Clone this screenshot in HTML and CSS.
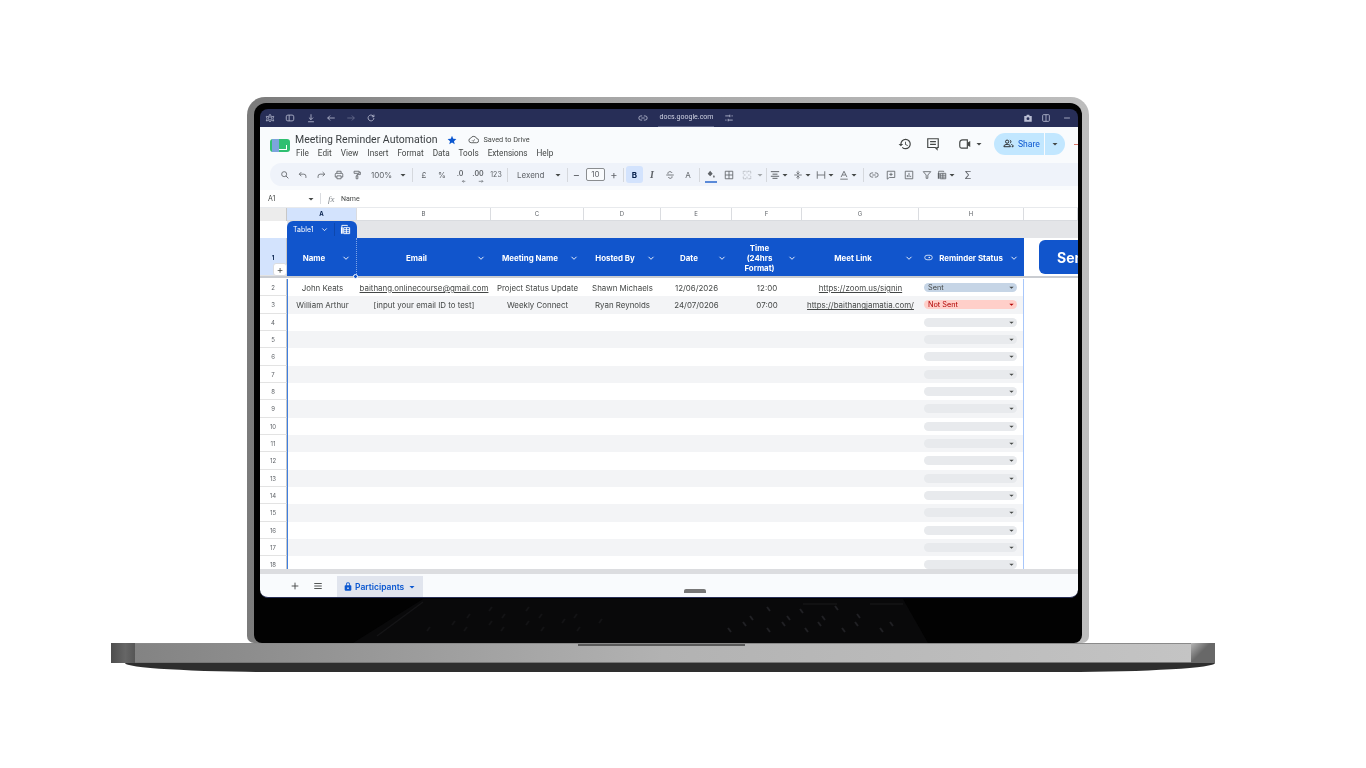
FILE: index.html
```html
<!DOCTYPE html>
<html lang="en">
<head>
    <meta charset="UTF-8">
    <meta name="viewport" content="width=device-width, initial-scale=1.0">
    <title>Meeting Reminder Automation</title>
    <link rel="stylesheet" href="styles.css">
</head>
<body>
    <!-- icon set -->
    <svg class="icon-defs" aria-hidden="true">
        <symbol id="i-search" viewBox="0 0 24 24"><circle cx="10" cy="10" r="6" fill="none" stroke="currentColor" stroke-width="2"/><path d="M14.5 14.5 20 20" stroke="currentColor" stroke-width="2.2"/></symbol>
        <symbol id="i-undo" viewBox="0 0 24 24"><path d="M8 5 3 10l5 5M3 10h11a5 5 0 0 1 5 5v4" fill="none" stroke="currentColor" stroke-width="2"/></symbol>
        <symbol id="i-redo" viewBox="0 0 24 24"><path d="m16 5 5 5-5 5M21 10H10a5 5 0 0 0-5 5v4" fill="none" stroke="currentColor" stroke-width="2"/></symbol>
        <symbol id="i-print" viewBox="0 0 24 24"><path d="M7 8V3h10v5M7 17H3v-7a2 2 0 0 1 2-2h14a2 2 0 0 1 2 2v7h-4M7 14h10v7H7z" fill="none" stroke="currentColor" stroke-width="2"/></symbol>
        <symbol id="i-paint" viewBox="0 0 24 24"><path d="M5 3h12v5H5zM17 5h3v6h-8v3M10 14h4v7h-4z" fill="none" stroke="currentColor" stroke-width="2"/></symbol>
        <symbol id="i-caret" viewBox="0 0 8 8"><path d="M1.5 3h5L4 5.5z" fill="currentColor"/></symbol>
        <symbol id="i-chevron" viewBox="0 0 10 10"><path d="M2.5 3.8 5 6.3 7.500 3.8" fill="none" stroke="currentColor" stroke-width=".9"/></symbol>
        <symbol id="i-dec-less" viewBox="0 0 24 24"><path d="M13 20h7M16 17l-3 3 3 3" fill="none" stroke="currentColor" stroke-width="1.6"/></symbol>
        <symbol id="i-dec-more" viewBox="0 0 24 24"><path d="M9 20h10M16 17l3 3-3 3" fill="none" stroke="currentColor" stroke-width="1.6"/></symbol>
        <symbol id="i-strike" viewBox="0 0 24 24"><path d="M3 12h18M17 7c-1-2-3-3-5-3-3 0-5 1.5-5 4 0 1 .4 1.5 1 2M8 17c1 2 2.5 3 4.5 3 3 0 4.5-1.5 4.5-3.5 0-.5-.1-1-.4-1.5" fill="none" stroke="currentColor" stroke-width="2"/></symbol>
        <symbol id="i-fill" viewBox="0 0 24 24"><path d="M10 2 4 9l6 6 6-6zM19 12c-1.2 2-2 3-2 4a2 2 0 0 0 4 0c0-1-.8-2-2-4z" fill="currentColor"/></symbol>
        <symbol id="i-borders" viewBox="0 0 24 24"><path d="M3 3h18v18H3zM12 3v18M3 12h18" fill="none" stroke="currentColor" stroke-width="2"/></symbol>
        <symbol id="i-merge" viewBox="0 0 24 24"><path d="M3 9V3h7M14 3h7v6M21 15v6h-7M10 21H3v-6M12 3v5M12 16v5M4 12h5M15 12h5" fill="none" stroke="currentColor" stroke-width="2" stroke-dasharray="3 1"/></symbol>
        <symbol id="i-align" viewBox="0 0 24 24"><path d="M2 4h20M6 10h12M2 15h20M6 20h12" fill="none" stroke="currentColor" stroke-width="2.4"/></symbol>
        <symbol id="i-valign" viewBox="0 0 24 24"><path d="M3 12h18M12 2v7M8.5 6 12 9.5 15.5 6M12 22v-7M8.5 18 12 14.5 15.5 18" fill="none" stroke="currentColor" stroke-width="2"/></symbol>
        <symbol id="i-wrap" viewBox="0 0 24 24"><path d="M3 3v18M21 3v18M3 12h18" fill="none" stroke="currentColor" stroke-width="2"/></symbol>
        <symbol id="i-rotate" viewBox="0 0 24 24"><path d="M5 17 12 3l7 14M8 12h8M3 22h18" fill="none" stroke="currentColor" stroke-width="2"/></symbol>
        <symbol id="i-link" viewBox="0 0 24 24"><path d="M10 7H7a5 5 0 0 0 0 10h3M14 7h3a5 5 0 0 1 0 10h-3M8 12h8" fill="none" stroke="currentColor" stroke-width="2"/></symbol>
        <symbol id="i-addnote" viewBox="0 0 24 24"><path d="M3 3h18v15H8l-5 4zM12 6.5v8M8 10.5h8" fill="none" stroke="currentColor" stroke-width="2"/></symbol>
        <symbol id="i-chart" viewBox="0 0 24 24"><path d="M3 3h18v18H3zM8 17v-5M12 17V7M16 17v-3" fill="none" stroke="currentColor" stroke-width="2"/></symbol>
        <symbol id="i-filter" viewBox="0 0 24 24"><path d="M3 4h18l-7 8v8h-4v-8z" fill="none" stroke="currentColor" stroke-width="2"/></symbol>
        <symbol id="i-table" viewBox="0 0 24 24"><path d="M4 8V3h12v2M8 8h13v13H8zM8 12.5h13M8 17h13M14 8v13" fill="none" stroke="currentColor" stroke-width="2"/><path d="M2 7h4v14H2z" fill="currentColor"/></symbol>
        <symbol id="i-history" viewBox="0 0 24 24"><path d="M13 3a9 9 0 0 0-9 9H1l3.89 3.89.07.14L9 12H6c0-3.87 3.13-7 7-7s7 3.13 7 7-3.13 7-7 7c-1.93 0-3.68-.79-4.94-2.06l-1.42 1.42A8.954 8.954 0 0 0 13 21a9 9 0 0 0 0-18zm-1 5v5l4.28 2.54.72-1.21-3.5-2.08V8H12z" fill="currentColor"/></symbol>
        <symbol id="i-comment" viewBox="0 0 24 24"><path d="M3 3h18v15h-2v3l-3-3H3zM7 8h10M7 12.5h10" fill="none" stroke="currentColor" stroke-width="2"/></symbol>
        <symbol id="i-video" viewBox="0 0 24 24"><path d="M8 5h8v14H6a3 3 0 0 1-3-3V10a5 5 0 0 1 5-5z" fill="none" stroke="currentColor" stroke-width="2"/><path d="m16 10 5-3v10l-5-3z" fill="currentColor"/></symbol>
        <symbol id="i-people" viewBox="0 0 24 24"><circle cx="9" cy="8" r="3.5" fill="none" stroke="currentColor" stroke-width="2"/><path d="M2 19v-1.5c0-2 4-3.5 7-3.5s7 1.5 7 3.5V19zM15 4.7a3.5 3.5 0 0 1 0 6.6M18 14c2 .6 4 1.6 4 3.5V19h-3" fill="none" stroke="currentColor" stroke-width="2"/></symbol>
        <symbol id="i-cloud" viewBox="0 0 24 24"><path d="M7 19a5 5 0 0 1-1-9.900A7 7 0 0 1 19 10a4.5 4.5 0 0 1-.5 9zM9 14l2 2 4-4" fill="none" stroke="currentColor" stroke-width="1.8"/></symbol>
        <symbol id="i-star" viewBox="0 0 24 24"><path d="m12 2 3 7 7.500.7-5.700 5 1.700 7.300L12 18.200 5.500 22l1.700-7.300-5.700-5L9 9z" fill="currentColor"/></symbol>
        <symbol id="i-lock" viewBox="0 0 24 24"><path d="M18 9h-1V7a5 5 0 0 0-10 0v2H6a2 2 0 0 0-2 2v9a2 2 0 0 0 2 2h12a2 2 0 0 0 2-2v-9a2 2 0 0 0-2-2zM9 7a3 3 0 0 1 6 0v2H9zm3 11a2 2 0 1 1 0-4 2 2 0 0 1 0 4z" fill="currentColor"/></symbol>
        <symbol id="i-menu" viewBox="0 0 24 24"><path d="M3 6h18M3 12h18M3 18h18" stroke="currentColor" stroke-width="2.2"/></symbol>
        <symbol id="i-plus" viewBox="0 0 24 24"><path d="M12 4v16M4 12h16" stroke="currentColor" stroke-width="2.2"/></symbol>
        <symbol id="i-shell" viewBox="0 0 24 24"><path d="M12 3 8 9 3 8l2 6-2 5 5-1 4 3 4-3 5 1-2-5 2-6-5 1zM12 9a4 4 0 1 0 0 8 4 4 0 0 0 0-8z" fill="none" stroke="currentColor" stroke-width="1.8"/></symbol>
        <symbol id="i-sidebar" viewBox="0 0 24 24"><rect x="3" y="5" width="18" height="14" rx="4" fill="none" stroke="currentColor" stroke-width="2"/><path d="M10 5v14" stroke="currentColor" stroke-width="2"/></symbol>
        <symbol id="i-download" viewBox="0 0 24 24"><path d="M12 3v13M7 11l5 5 5-5M5 21h14" fill="none" stroke="currentColor" stroke-width="2"/></symbol>
        <symbol id="i-back" viewBox="0 0 24 24"><path d="M21 12H4M10 6l-6 6 6 6" fill="none" stroke="currentColor" stroke-width="2"/></symbol>
        <symbol id="i-forward" viewBox="0 0 24 24"><path d="M3 12h17M14 6l6 6-6 6" fill="none" stroke="currentColor" stroke-width="2"/></symbol>
        <symbol id="i-reload" viewBox="0 0 24 24"><path d="M19 12a7 7 0 1 1-2-5l2 2M19 4v5h-5" fill="none" stroke="currentColor" stroke-width="2"/></symbol>
        <symbol id="i-tune" viewBox="0 0 24 24"><path d="M3 7h11M18 7h3M14 4v6M3 17h3M10 17h11M10 14v6" fill="none" stroke="currentColor" stroke-width="2"/></symbol>
        <symbol id="i-camera" viewBox="0 0 24 24"><path d="M3 7h5l1-3h6l1 3h5v14H3zM12 10a3.5 3.5 0 1 0 0 7 3.5 3.5 0 0 0 0-7z" fill="currentColor" fill-rule="evenodd"/></symbol>
        <symbol id="i-panel" viewBox="0 0 24 24"><rect x="4" y="4" width="16" height="16" rx="2" fill="none" stroke="currentColor" stroke-width="2"/><path d="M12 4v16" stroke="currentColor" stroke-width="2"/></symbol>
        <symbol id="i-dash" viewBox="0 0 24 24"><path d="M5 12h14" stroke="currentColor" stroke-width="2"/></symbol>
        <symbol id="i-eye" viewBox="0 0 24 24"><rect x="2" y="6" width="20" height="12" rx="6" fill="none" stroke="currentColor" stroke-width="2"/><circle cx="14" cy="12" r="2" fill="currentColor"/></symbol>
    </svg>

    <div class="laptop">
        <div class="lid">
            <div class="screen">
                <!-- browser strip -->
                <div class="browser-bar">
                    <div class="browser-left">
                        <svg class="bi"><use href="#i-shell"/></svg>
                        <svg class="bi"><use href="#i-sidebar"/></svg>
                        <svg class="bi"><use href="#i-download"/></svg>
                        <svg class="bi"><use href="#i-back"/></svg>
                        <svg class="bi dim"><use href="#i-forward"/></svg>
                        <svg class="bi"><use href="#i-reload"/></svg>
                    </div>
                    <div class="browser-url">
                        <svg class="bi"><use href="#i-link"/></svg>
                        <span class="url-text">docs.google.com</span>
                        <svg class="bi"><use href="#i-tune"/></svg>
                    </div>
                    <div class="browser-right">
                        <svg class="bi"><use href="#i-camera"/></svg>
                        <svg class="bi"><use href="#i-panel"/></svg>
                        <svg class="bi"><use href="#i-dash"/></svg>
                    </div>
                </div>

                <!-- docs header -->
                <div class="app-bar">
                    <div class="app-top">
                        <div class="logo"><span class="logo-side"></span><span class="logo-mark"></span></div>
                        <div class="title-block">
                            <div class="title-row">
                                <span class="doc-title">Meeting Reminder Automation</span>
                                <svg class="star"><use href="#i-star"/></svg>
                                <svg class="cloud"><use href="#i-cloud"/></svg>
                                <span class="saved">Saved to Drive</span>
                            </div>
                            <div class="menu">
                                <span>File</span><span>Edit</span><span>View</span><span>Insert</span><span>Format</span><span>Data</span><span>Tools</span><span>Extensions</span><span>Help</span>
                            </div>
                        </div>
                        <div class="app-actions">
                            <svg class="act-icon"><use href="#i-history"/></svg>
                            <svg class="act-icon"><use href="#i-comment"/></svg>
                            <span class="meet"><svg class="act-icon"><use href="#i-video"/></svg><svg class="caret"><use href="#i-caret"/></svg></span>
                            <div class="share">
                                <span class="share-main"><svg class="people"><use href="#i-people"/></svg>Share</span>
                                <span class="share-drop"><svg class="caret"><use href="#i-caret"/></svg></span>
                            </div>
                            <span class="avatar"></span>
                        </div>
                    </div>

                    <div class="toolbar">
                        <span class="tool"><svg><use href="#i-search"/></svg></span>
                        <span class="tool"><svg><use href="#i-undo"/></svg></span>
                        <span class="tool"><svg><use href="#i-redo"/></svg></span>
                        <span class="tool"><svg><use href="#i-print"/></svg></span>
                        <span class="tool"><svg><use href="#i-paint"/></svg></span>
                        <span class="select select-zoom">100%<svg class="caret"><use href="#i-caret"/></svg></span>
                        <span class="sep"></span>
                        <span class="tool">£</span>
                        <span class="tool">%</span>
                        <span class="tool dec">.0<svg><use href="#i-dec-less"/></svg></span>
                        <span class="tool dec">.00<svg><use href="#i-dec-more"/></svg></span>
                        <span class="tool small">123</span>
                        <span class="sep"></span>
                        <span class="select select-font">Lexend<svg class="caret"><use href="#i-caret"/></svg></span>
                        <span class="sep"></span>
                        <span class="tool tool-minus">&minus;</span>
                        <span class="size-box">10</span>
                        <span class="tool tool-plus">+</span>
                        <span class="sep"></span>
                        <span class="tool tool-bold">B</span>
                        <span class="tool tool-italic">I</span>
                        <span class="tool"><svg><use href="#i-strike"/></svg></span>
                        <span class="tool tool-color">A</span>
                        <span class="sep"></span>
                        <span class="tool tool-fill"><svg><use href="#i-fill"/></svg></span>
                        <span class="tool"><svg><use href="#i-borders"/></svg></span>
                        <span class="tool dim"><svg><use href="#i-merge"/></svg></span>
                        <svg class="caret dim"><use href="#i-caret"/></svg>
                        <span class="sep"></span>
                        <span class="combo"><svg class="combo-icon"><use href="#i-align"/></svg><svg class="caret"><use href="#i-caret"/></svg></span>
                        <span class="combo"><svg class="combo-icon"><use href="#i-valign"/></svg><svg class="caret"><use href="#i-caret"/></svg></span>
                        <span class="combo"><svg class="combo-icon"><use href="#i-wrap"/></svg><svg class="caret"><use href="#i-caret"/></svg></span>
                        <span class="combo"><svg class="combo-icon"><use href="#i-rotate"/></svg><svg class="caret"><use href="#i-caret"/></svg></span>
                        <span class="sep"></span>
                        <span class="tool tool-link"><svg><use href="#i-link"/></svg></span>
                        <span class="tool"><svg><use href="#i-addnote"/></svg></span>
                        <span class="tool"><svg><use href="#i-chart"/></svg></span>
                        <span class="tool"><svg><use href="#i-filter"/></svg></span>
                        <span class="combo"><svg class="combo-icon"><use href="#i-table"/></svg><svg class="caret"><use href="#i-caret"/></svg></span>
                        <span class="tool tool-sigma">&Sigma;</span>
                    </div>
                </div>

                <!-- formula bar -->
                <div class="formula-bar">
                    <span class="cell-ref">A1</span>
                    <svg class="caret"><use href="#i-caret"/></svg>
                    <span class="formula-sep"></span>
                    <span class="fx">fx</span>
                    <span class="formula-text">Name</span>
                </div>

                <!-- sheet -->
                <div class="cols col-head">
                    <div class="corner"></div>
                    <div class="col-label active">A</div>
                    <div class="col-label">B</div>
                    <div class="col-label">C</div>
                    <div class="col-label">D</div>
                    <div class="col-label">E</div>
                    <div class="col-label">F</div>
                    <div class="col-label">G</div>
                    <div class="col-label">H</div>
                    <div class="col-label"></div>
                </div>

                <div class="table-strip">
                    <div class="strip-gutter"></div>
                    <div class="strip-gray">
                        <div class="table-tab">
                            <span>Table1</span>
                            <svg class="tab-chev"><use href="#i-chevron"/></svg>
                            <span class="tab-div"></span>
                            <svg class="tab-table"><use href="#i-table"/></svg>
                        </div>
                    </div>
                </div>

                <div class="cols head-row">
                    <div class="row-num head-num">1<span class="add-box">+</span></div>
                    <div class="th th-first"><span>Name</span><svg><use href="#i-chevron"/></svg><i class="sel-handle"></i></div>
                    <div class="th"><span>Email</span><svg><use href="#i-chevron"/></svg></div>
                    <div class="th"><span>Meeting Name</span><svg><use href="#i-chevron"/></svg></div>
                    <div class="th"><span>Hosted By</span><svg><use href="#i-chevron"/></svg></div>
                    <div class="th"><span>Date</span><svg><use href="#i-chevron"/></svg></div>
                    <div class="th"><span>Time<br>(24hrs<br>Format)</span><svg><use href="#i-chevron"/></svg></div>
                    <div class="th"><span>Meet Link</span><svg><use href="#i-chevron"/></svg></div>
                    <div class="th th-status"><svg class="eye"><use href="#i-eye"/></svg><span>Reminder Status</span><svg><use href="#i-chevron"/></svg></div>
                    <div class="send-cell"><button class="send-btn">Send</button></div>
                </div>

                <div class="rows">
                    <div class="cols row">
                        <div class="row-num">2</div>
                        <div class="td">John Keats</div>
                        <div class="td link">baithang.onlinecourse@gmail.com</div>
                        <div class="td">Project Status Update</div>
                        <div class="td">Shawn Michaels</div>
                        <div class="td">12/06/2026</div>
                        <div class="td">12:00</div>
                        <div class="td link">https://zoom.us/signin</div>
                        <div class="td-status"><span class="pill pill-sent">Sent<svg class="caret"><use href="#i-caret"/></svg></span></div>
                    </div>
                    <div class="cols row alt">
                        <div class="row-num">3</div>
                        <div class="td">William Arthur</div>
                        <div class="td">[input your email ID to test]</div>
                        <div class="td">Weekly Connect</div>
                        <div class="td">Ryan Reynolds</div>
                        <div class="td">24/07/0206</div>
                        <div class="td">07:00</div>
                        <div class="td link">https://baithangjamatia.com/</div>
                        <div class="td-status"><span class="pill pill-not">Not Sent<svg class="caret"><use href="#i-caret"/></svg></span></div>
                    </div>
                    <div class="cols row"><div class="row-num">4</div><div class="blank"></div><div class="td-status"><span class="pill"><svg class="caret"><use href="#i-caret"/></svg></span></div></div>
                    <div class="cols row alt"><div class="row-num">5</div><div class="blank"></div><div class="td-status"><span class="pill"><svg class="caret"><use href="#i-caret"/></svg></span></div></div>
                    <div class="cols row"><div class="row-num">6</div><div class="blank"></div><div class="td-status"><span class="pill"><svg class="caret"><use href="#i-caret"/></svg></span></div></div>
                    <div class="cols row alt"><div class="row-num">7</div><div class="blank"></div><div class="td-status"><span class="pill"><svg class="caret"><use href="#i-caret"/></svg></span></div></div>
                    <div class="cols row"><div class="row-num">8</div><div class="blank"></div><div class="td-status"><span class="pill"><svg class="caret"><use href="#i-caret"/></svg></span></div></div>
                    <div class="cols row alt"><div class="row-num">9</div><div class="blank"></div><div class="td-status"><span class="pill"><svg class="caret"><use href="#i-caret"/></svg></span></div></div>
                    <div class="cols row"><div class="row-num">10</div><div class="blank"></div><div class="td-status"><span class="pill"><svg class="caret"><use href="#i-caret"/></svg></span></div></div>
                    <div class="cols row alt"><div class="row-num">11</div><div class="blank"></div><div class="td-status"><span class="pill"><svg class="caret"><use href="#i-caret"/></svg></span></div></div>
                    <div class="cols row"><div class="row-num">12</div><div class="blank"></div><div class="td-status"><span class="pill"><svg class="caret"><use href="#i-caret"/></svg></span></div></div>
                    <div class="cols row alt"><div class="row-num">13</div><div class="blank"></div><div class="td-status"><span class="pill"><svg class="caret"><use href="#i-caret"/></svg></span></div></div>
                    <div class="cols row"><div class="row-num">14</div><div class="blank"></div><div class="td-status"><span class="pill"><svg class="caret"><use href="#i-caret"/></svg></span></div></div>
                    <div class="cols row alt"><div class="row-num">15</div><div class="blank"></div><div class="td-status"><span class="pill"><svg class="caret"><use href="#i-caret"/></svg></span></div></div>
                    <div class="cols row"><div class="row-num">16</div><div class="blank"></div><div class="td-status"><span class="pill"><svg class="caret"><use href="#i-caret"/></svg></span></div></div>
                    <div class="cols row alt"><div class="row-num">17</div><div class="blank"></div><div class="td-status"><span class="pill"><svg class="caret"><use href="#i-caret"/></svg></span></div></div>
                    <div class="cols row"><div class="row-num">18</div><div class="blank"></div><div class="td-status"><span class="pill"><svg class="caret"><use href="#i-caret"/></svg></span></div></div>
                </div>

                <div class="scrollbar"></div>

                <div class="sheet-tabs">
                    <svg class="tabs-icon tabs-plus"><use href="#i-plus"/></svg>
                    <svg class="tabs-icon tabs-menu"><use href="#i-menu"/></svg>
                    <div class="sheet-tab">
                        <svg class="lock"><use href="#i-lock"/></svg>
                        <span>Participants</span>
                        <svg class="caret"><use href="#i-caret"/></svg>
                    </div>
                    <span class="home-handle"></span>
                </div>

                <!-- keyboard reflected in the bezel -->
                <svg class="reflection" viewBox="0 0 818 45">
                    <polygon points="163,1 643,1 668,45 93,45" fill="#09090a"/>
                    <path d="M163 4 117 38M543 6h34M610 6h33" stroke="#141416" stroke-width="1.5" fill="none"/>
                    <path d="M507 9l3 4M540 11l3 4M575 8l3 4M490 18l3 4M527 18l3 4M562 18l3 4M597 16l3 4M483 24l3 4M522 24l3 4M558 24l3 4M595 24l3 4M630 24l3 4M468 30l3 4M507 30l3 4M545 30l3 4M582 30l3 4M620 30l3 4" stroke="#202024" stroke-width="2" fill="none"/>
                    <path d="M232 9l-3 4M269 9l-3 4M210 16l-3 4M245 16l-3 4M282 16l-3 4M317 16l-3 4M195 23l-3 4M232 23l-3 4M269 23l-3 4M305 21l-3 4M342 21l-3 4M170 29l-3 4M207 29l-3 4M244 29l-3 4M284 29l-3 4M320 29l-3 4" stroke="#131315" stroke-width="2" fill="none"/>
                </svg>
            </div>
        </div>
        <div class="base">
            <div class="base-cap cap-left"></div>
            <div class="base-mid"><span class="base-notch"></span></div>
            <div class="base-cap cap-right"></div>
        </div>
        <div class="base-shadow"></div>
    </div>
</body>
</html>
```

FILE: styles.css
```css
* {
    box-sizing: border-box;
}
html, body {
    margin: 0;
    height: 100%;
    background-color: #fff;
    overflow: hidden;
}
body {
    font-family: "Inter", "Liberation Sans", sans-serif;
    color: #444746;
}
svg {
    display: block;
}
.icon-defs {
    width: 0;
    height: 0;
    overflow: hidden;
}
.caret {
    width: 8px;
    height: 8px;
    flex: none;
    color: #444746;
}
.dim {
    opacity: .45;
}

/* laptop body */
.laptop {
    padding: 97px 0 0 111px;
}
.lid {
    margin-left: 136px;
    width: 842px;
    height: 546px;
    padding: 6px 7px 0;
    border-radius: 18px 18px 7px 7px;
    background: linear-gradient(90deg, #7b7b7b, #a5a5a5 40%, #bdbdbd);
}
.screen {
    width: 828px;
    height: 540px;
    padding: 6px 6px 0;
    background-color: #020202;
    border-radius: 12px 12px 8px 8px;
    display: flex;
    flex-direction: column;
    overflow: hidden;
    filter: blur(.3px);
}
.screen > * {
    flex: none;
    width: 818px;
    overflow: hidden;
}
.reflection {
    height: 45px;
}
.base {
    display: flex;
    width: 1104px;
    height: 20px;
}
.base-cap {
    width: 24px;
    background: linear-gradient(90deg, #4d4d4d, #666 60%, #565656);
}
.cap-right {
    background: linear-gradient(135deg, #b5b5b5, #686868 45%);
}
.base-mid {
    flex: 1;
    background: linear-gradient(90deg, #838383, #b2b2b2 50%, #c4c4c4);
    border-top: 1px solid #8a8a8a;
    border-bottom: 1px solid #777;
}
.base-notch {
    display: block;
    width: 167px;
    height: 2px;
    margin-left: 443px;
    background-color: #5a5a5a;
}
.base-shadow {
    width: 1090px;
    height: 9px;
    margin-left: 14px;
    background-color: #2e2e2e;
    border-radius: 0 0 150px 150px / 0 0 9px 9px;
}

/* browser strip */
.browser-bar {
    height: 18px;
    background-color: #272e57;
    color: #b9bdd2;
    display: flex;
    align-items: center;
    border-radius: 8px 8px 0 0;
}
.bi {
    width: 10px;
    height: 10px;
    flex: none;
}
.browser-left {
    display: flex;
    gap: 10.3px;
    padding-left: 5px;
}
.browser-url {
    display: flex;
    align-items: center;
    margin-left: 262px;
    gap: 10px;
}
.url-text {
    font-family: "Roboto", sans-serif;
    font-size: 7px;
    line-height: 17px;
    color: #cfd2e2;
    border-bottom: 1px solid #5c6285;
    padding: 0 1px;
}
.browser-right {
    display: flex;
    gap: 8px;
    margin-left: 289px;
}
.browser-right .bi:last-child {
    margin-left: 3px;
}

/* docs header */
.app-bar {
    height: 63px;
    background-color: #f9fbfd;
}
.app-top {
    height: 36px;
    display: flex;
    align-items: flex-start;
    padding-left: 10px;
}
.logo {
    width: 20px;
    height: 13px;
    margin-top: 12px;
    border-radius: 3px;
    background-color: #2fbf71;
    display: flex;
    overflow: hidden;
}
.logo-side {
    width: 7px;
    margin-left: 2px;
    background-color: #7ca4dd;
}
.logo-mark {
    width: 8px;
    height: 5px;
    border-bottom: 1px solid #fff;
    border-right: 1px solid #fff;
    margin-top: 6px;
}
.title-block {
    margin-left: 5px;
    padding-top: 5px;
}
.title-row {
    display: flex;
    align-items: center;
    height: 15px;
}
.doc-title {
    font-family: "Roboto", sans-serif;
    font-size: 10.5px;
    color: #3c4043;
    white-space: nowrap;
}
.star {
    width: 10px;
    height: 10px;
    margin-left: 10px;
    color: #0b57d0;
}
.cloud {
    width: 11px;
    height: 11px;
    margin-left: 11px;
    color: #444746;
}
.saved {
    margin-left: 4px;
    font-family: "Roboto", sans-serif;
    font-size: 7.3px;
    color: #444746;
    white-space: nowrap;
}
.menu {
    display: flex;
    gap: 9px;
    padding-left: 1px;
    margin-top: 1px;
    font-family: "Roboto", sans-serif;
    font-size: 8.2px;
    line-height: 11px;
    color: #444746;
}
.app-actions {
    display: flex;
    align-items: center;
    margin-left: auto;
    height: 34px;
}
.act-icon {
    width: 14px;
    height: 14px;
    margin-right: 14px;
    color: #444746;
}
.meet {
    display: flex;
    align-items: center;
    margin-left: 4px;
    margin-right: 11px;
}
.meet .act-icon {
    margin-right: 3px;
}
.share {
    display: flex;
    height: 22px;
    width: 71px;
    border-radius: 11px;
    background-color: #c2e7ff;
    color: #0b57d0;
}
.share-main {
    display: flex;
    align-items: center;
    gap: 4px;
    width: 51px;
    padding: 0 0 1px 9px;
    font-family: "Roboto", sans-serif;
    font-size: 8.6px;
    font-weight: 400;
    border-right: 1px solid #f9fbfd;
}
.people {
    width: 11px;
    height: 11px;
    color: #1f1f1f;
}
.share-drop {
    flex: 1;
    display: flex;
    align-items: center;
    justify-content: center;
}
.avatar {
    width: 10px;
    height: 1px;
    margin-left: 9px;
    margin-right: -6px;
    background-color: #d9776a;
}

/* toolbar */
.toolbar {
    height: 23px;
    margin-left: 10px;
    padding-left: 6px;
    display: flex;
    align-items: center;
    background-color: #eff3fa;
    border-radius: 12px 0 0 12px;
    font-size: 8px;
    color: #5f6368;
}
.tool {
    width: 18px;
    height: 18px;
    flex: none;
    display: flex;
    align-items: center;
    justify-content: center;
}
.tool svg {
    width: 10px;
    height: 10px;
}
.tool.small {
    font-size: 7px;
}
.tool.dec {
    position: relative;
    padding-bottom: 2px;
    font-weight: 600;
    font-size: 7px;
}
.tool.dec svg {
    position: absolute;
    right: 2px;
    bottom: 1px;
}
.select {
    display: flex;
    align-items: center;
    justify-content: space-between;
    height: 18px;
    flex: none;
    padding: 0 3px 0 5px;
}
.select-zoom {
    width: 44px;
}
.select-font {
    width: 55px;
    padding-left: 7px;
}
.sep {
    width: 1px;
    height: 14px;
    flex: none;
    margin: 0 2px;
    background-color: #d5d8dd;
}
.tool-minus {
    width: 13px;
    font-size: 11px;
}
.tool-plus {
    width: 14px;
    font-size: 11px;
}
.size-box {
    width: 19px;
    height: 13px;
    flex: none;
    margin: 0 2px 0 3px;
    border: 1px solid #8a8d90;
    border-radius: 2px;
    text-align: center;
    line-height: 11px;
    background-color: #f9fbfd;
}
.tool-bold {
    width: 17px;
    height: 17px;
    background-color: #d3e3fd;
    border-radius: 3px;
    font-weight: 700;
    color: #041e49;
}
.tool-italic {
    font-style: italic;
    font-weight: 700;
    font-family: "Liberation Serif", serif;
    font-size: 10px;
}
.tool-fill {
    position: relative;
}
.tool-fill::after {
    content: "";
    position: absolute;
    left: 3px;
    right: 3px;
    bottom: 1px;
    height: 2px;
    background-color: #5a8ad8;
}
.combo {
    width: 23px;
    height: 18px;
    flex: none;
    display: flex;
    align-items: center;
}
.combo-icon {
    width: 10px;
    height: 10px;
    margin: 0 1px;
}
.tool-link {
    width: 16px;
}
.tool-sigma {
    font-size: 10px;
}

/* formula bar */
.formula-bar {
    height: 17px;
    display: flex;
    align-items: center;
    background-color: #fff;
    font-size: 7px;
    color: #444746;
    padding-left: 8px;
}
.cell-ref {
    width: 39px;
}
.formula-sep {
    width: 1px;
    height: 11px;
    margin-left: 5px;
    background-color: #dadce0;
}
.fx {
    margin-left: 7px;
    width: 13px;
    font-family: "Liberation Serif", serif;
    font-style: italic;
    font-size: 9px;
    color: #80868b;
}
.formula-text {
    font-family: "Roboto", sans-serif;
}

/* sheet grid */
.cols {
    display: grid;
    grid-template-columns: 27px 70px 134px 93px 77px 71px 70px 117px 105px 54px;
}
.col-head {
    height: 14px;
    background-color: #fff;
    border-top: 1px solid #e8eaed;
}
.corner {
    background-color: #ececec;
    border-right: 1px solid #c7c7c7;
}
.col-label {
    font-size: 6px;
    line-height: 12px;
    text-align: center;
    color: #5f6368;
    border-right: 1px solid #dadce0;
    border-bottom: 1px solid #dadce0;
}
.col-label.active {
    background-color: #d3e3fd;
    color: #041e49;
    font-weight: 700;
}
.table-strip {
    height: 17px;
    display: flex;
}
.strip-gutter {
    width: 27px;
    flex: none;
    background-color: #fff;
}
.strip-gray {
    flex: 1;
    background-color: #e4e5e8;
}
.table-tab {
    width: 70px;
    height: 17px;
    display: flex;
    align-items: center;
    padding-left: 6px;
    background-color: #1155cc;
    color: #fff;
    font-size: 7px;
    border-radius: 6px 6px 0 0;
}
.tab-chev {
    width: 9px;
    height: 9px;
    margin-left: 6px;
}
.tab-div {
    width: 1px;
    height: 13px;
    margin-left: 5px;
    background-color: #0d47ad;
}
.tab-table {
    width: 11px;
    height: 11px;
    margin-left: 5px;
}
.head-row {
    height: 40px;
    border-bottom: 2px solid #c9ccd1;
    overflow: visible;
    position: relative;
}
.row-num {
    font-size: 6px;
    color: #5f6368;
    display: flex;
    align-items: center;
    justify-content: center;
    padding-top: 1px;
    background-color: #fff;
    border-right: 1px solid #c7c7c7;
    border-bottom: 1px solid #e3e3e3;
}
.head-num {
    position: relative;
    background-color: #d3e3fd;
    color: #041e49;
    font-weight: 700;
}
.add-box {
    position: absolute;
    right: -1px;
    bottom: -1px;
    width: 14px;
    height: 13px;
    background-color: #fff;
    border-radius: 3px;
    font-size: 10px;
    font-weight: 400;
    line-height: 11px;
    text-align: center;
    color: #444746;
    border: 1px solid #dadce0;
}
.th {
    position: relative;
    display: flex;
    align-items: center;
    padding: 1px 5px 0 0;
    background-color: #1155cc;
    color: #fff;
    font-size: 7.9px;
    font-weight: 700;
    text-align: center;
    line-height: 10px;
}
.th span {
    flex: 1;
    white-space: nowrap;
}
.th svg {
    width: 10px;
    height: 10px;
    flex: none;
}
.th .eye {
    width: 9px;
    height: 9px;
    margin-left: 5px;
}
.th-first {
    border-right: 1px dotted #7fa3e6;
}
.sel-handle {
    position: absolute;
    right: -2px;
    bottom: -3px;
    width: 5px;
    height: 5px;
    border-radius: 50%;
    background-color: #1155cc;
    border: 1px solid #fff;
    z-index: 2;
}
.send-cell {
    background-color: #fff;
    display: flex;
    align-items: center;
    padding-left: 15px;
    overflow: hidden;
}
.send-btn {
    flex: none;
    width: 160px;
    height: 34px;
    border: none;
    border-radius: 6px;
    padding: 0 0 0 18px;
    background-color: #1155cc;
    color: #fff;
    font-family: inherit;
    font-size: 14px;
    font-weight: 700;
    text-align: left;
    white-space: nowrap;
}
.rows {
    height: 291px;
    padding-top: 1px;
    background-color: #fff;
}
.row {
    height: 17.33px;
}
.row > :not(.row-num) {
    background-color: #fff;
}
.row.alt > :not(.row-num) {
    background-color: #f3f4f6;
}
.row > :nth-child(2) {
    border-left: 1px solid #3f7fe0;
}
.row > .td-status {
    border-right: 1px solid #a8c7fa;
}
.td {
    font-size: 7.9px;
    line-height: 18.5px;
    text-align: center;
    color: #444746;
    white-space: nowrap;
    overflow: hidden;
}
.td.link {
    text-decoration: underline;
}
.blank {
    grid-column: 2 / 9;
}
.td-status {
    grid-column: 9;
    display: flex;
    align-items: center;
    padding: 0 6px 0 5px;
}
.pill {
    width: 93px;
    height: 9px;
    display: flex;
    align-items: center;
    padding: 0 2px 0 4px;
    border-radius: 5px;
    background-color: #e8eaed;
    font-size: 7.3px;
    line-height: 9px;
}
.pill .caret {
    width: 7px;
    height: 7px;
    margin-left: auto;
}
.pill-sent {
    background-color: #c6d5e6;
    color: #444746;
}
.pill-not {
    background-color: #ffcfc9;
    color: #b10202;
}
.pill-not .caret {
    color: #b10202;
}
.scrollbar {
    height: 5px;
    background-color: #dcdde0;
}

/* sheet tabs */
.sheet-tabs {
    height: 24px;
    display: flex;
    background-color: #f9fbfd;
    border-bottom: 1px solid #272e57;
    border-radius: 0 0 8px 8px;
}
.tabs-icon {
    width: 10px;
    height: 10px;
    margin-top: 7px;
    color: #444746;
}
.tabs-plus {
    margin-left: 30px;
}
.tabs-menu {
    margin-left: 13px;
}
.sheet-tab {
    display: flex;
    align-items: center;
    width: 86px;
    margin: 2px 0 0 14px;
    padding-left: 6px;
    background-color: #e1e5ee;
    color: #0b57d0;
    font-size: 8.5px;
    font-weight: 600;
}
.lock {
    width: 10px;
    height: 11px;
    margin-right: 2px;
    color: #0b57d0;
}
.sheet-tab .caret {
    margin-left: 4px;
    color: #0b57d0;
}
.home-handle {
    width: 22px;
    height: 4px;
    margin: 15px 0 0 261px;
    border-radius: 2px 2px 0 0;
    background-color: #777;
}
```
